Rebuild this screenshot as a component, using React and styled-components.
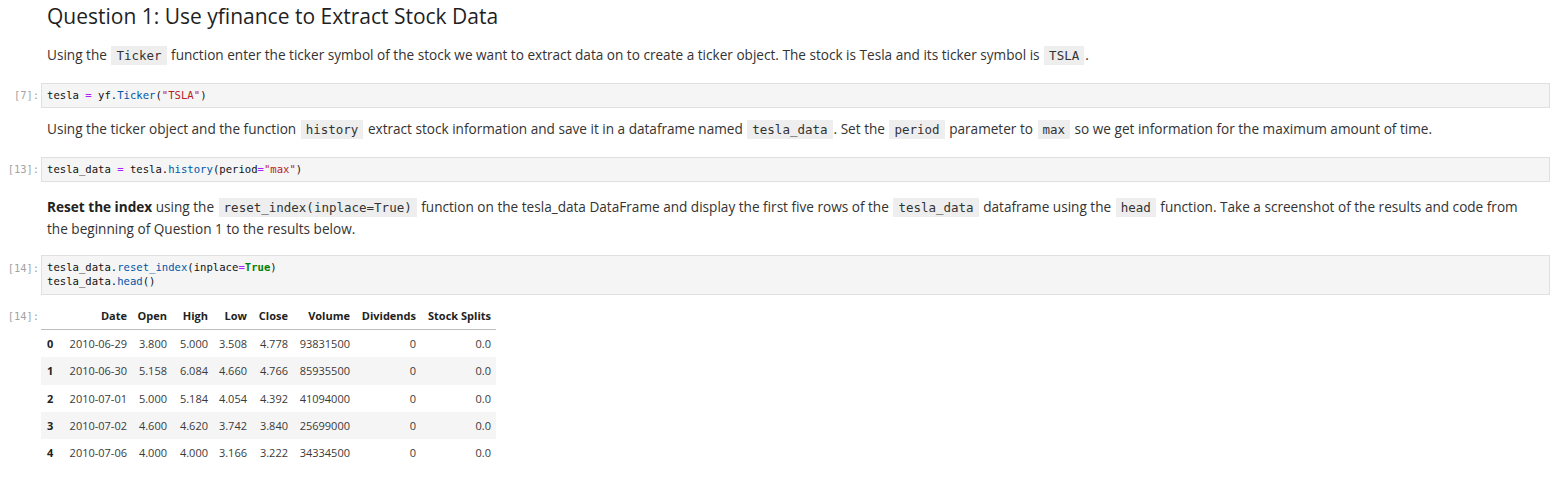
import React from "react";
import styled, { createGlobalStyle } from "styled-components";

const GlobalStyle = createGlobalStyle`
  body {
    margin: 0;
    background: #fff;
  }
`;

const Notebook = styled.div`
  width: 1558px;
  box-sizing: border-box;
  padding: 2px 8px 0 0;
  font-family: "Open Sans", "Noto Sans", sans-serif;
  color: #333;
`;

const Cell = styled.div`
  display: grid;
  grid-template-columns: 41px 1fr;
  margin-top: ${(p) => p.$mt || 0}px;
`;

const Prompt = styled.div`
  font-family: "DejaVu Sans Mono", "Liberation Mono", monospace;
  font-size: 10.4px;
  color: #a3a3a3;
  text-align: right;
  padding: ${(p) => p.$top || 5}px 2px 0 0;
  line-height: 14px;
  white-space: nowrap;
`;

const Markdown = styled.div`
  padding: 0 24px 0 6px;
`;

const Heading = styled.h2`
  margin: 0;
  font-size: 21px;
  line-height: 28px;
  font-weight: 400;
  color: #1f1f1f;
`;

const Para = styled.p`
  margin: 0;
  font-size: 13.6px;
  line-height: 21px;
  color: #333;

  b {
    font-weight: 700;
    color: #222;
  }
`;

const InlineCode = styled.code`
  font-family: "DejaVu Sans Mono", "Liberation Mono", monospace;
  font-size: 12.5px;
  background: #eee;
  color: #333;
  padding: 2px 5px;
  margin: 0 1px;
`;

const CodeBox = styled.pre`
  margin: 0;
  box-sizing: border-box;
  border: 1px solid #e0e0e0;
  background: #f5f5f5;
  padding: 4px 5px 5px;
  min-height: ${(p) => p.$min || 0}px;
  font-family: "DejaVu Sans Mono", "Liberation Mono", monospace;
  font-size: 10.6px;
  line-height: 14px;
  color: #111;
`;

const Tok = styled.span`
  color: ${(p) =>
    p.$k === "op" ? "#aa22ff" : p.$k === "prop" ? "#0055aa" : p.$k === "str" ? "#ba2121" : p.$k === "kw" ? "#008000" : "#111"};
  font-weight: ${(p) => (p.$k === "kw" ? 700 : 400)};
`;

const Table = styled.table`
  border-collapse: collapse;
  table-layout: fixed;
  width: 455px;
  font-family: "Open Sans", "Noto Sans", sans-serif;
  font-size: 11px;
  color: #3a3a3a;
`;

const Th = styled.th`
  text-align: right;
  font-weight: 700;
  color: #222;
  height: 28px;
  padding: 0 5px;
  border-bottom: 1px solid #bdbdbd;
  white-space: nowrap;
`;

const Row = styled.tr`
  background: ${(p) => (p.$odd ? "#f5f5f5" : "#fff")};
`;

const Td = styled.td`
  text-align: ${(p) => (p.$left ? "left" : "right")};
  font-weight: ${(p) => (p.$bold ? 700 : 400)};
  color: ${(p) => (p.$bold ? "#222" : "#3a3a3a")};
  height: 27.3px;
  padding: 0 5px 0 ${(p) => (p.$left ? 6 : 5)}px;
  white-space: nowrap;
`;

const widths = [20, 71, 40, 41, 39, 41, 62, 66, 75];
const headers = ["", "Date", "Open", "High", "Low", "Close", "Volume", "Dividends", "Stock Splits"];
const rows = [
  ["0", "2010-06-29", "3.800", "5.000", "3.508", "4.778", "93831500", "0", "0.0"],
  ["1", "2010-06-30", "5.158", "6.084", "4.660", "4.766", "85935500", "0", "0.0"],
  ["2", "2010-07-01", "5.000", "5.184", "4.054", "4.392", "41094000", "0", "0.0"],
  ["3", "2010-07-02", "4.600", "4.620", "3.742", "3.840", "25699000", "0", "0.0"],
  ["4", "2010-07-06", "4.000", "4.000", "3.166", "3.222", "34334500", "0", "0.0"],
];

export default function App() {
  return (
    <>
      <GlobalStyle />
      <Notebook>
        <Cell>
          <div />
          <Markdown>
            <Heading>Question 1: Use yfinance to Extract Stock Data</Heading>
          </Markdown>
        </Cell>

        <Cell $mt={14}>
          <div />
          <Markdown>
            <Para>
              Using the <InlineCode>Ticker</InlineCode> function enter the ticker symbol of the stock we want to
              extract data on to create a ticker object. The stock is Tesla and its ticker symbol is{" "}
              <InlineCode>TSLA</InlineCode>.
            </Para>
          </Markdown>
        </Cell>

        <Cell $mt={17}>
          <Prompt>[7]:</Prompt>
          <CodeBox>
            <Tok>tesla </Tok>
            <Tok $k="op">=</Tok>
            <Tok> yf.</Tok>
            <Tok $k="prop">Ticker</Tok>
            <Tok>(</Tok>
            <Tok $k="str">"TSLA"</Tok>
            <Tok>)</Tok>
          </CodeBox>
        </Cell>

        <Cell $mt={10}>
          <div />
          <Markdown>
            <Para>
              Using the ticker object and the function <InlineCode>history</InlineCode> extract stock information
              and save it in a dataframe named <InlineCode>tesla_data</InlineCode>. Set the{" "}
              <InlineCode>period</InlineCode> parameter to <InlineCode>max</InlineCode> so we get information for
              the maximum amount of time.
            </Para>
          </Markdown>
        </Cell>

        <Cell $mt={17}>
          <Prompt>[13]:</Prompt>
          <CodeBox>
            <Tok>tesla_data </Tok>
            <Tok $k="op">=</Tok>
            <Tok> tesla.</Tok>
            <Tok $k="prop">history</Tok>
            <Tok>(period</Tok>
            <Tok $k="op">=</Tok>
            <Tok $k="str">"max"</Tok>
            <Tok>)</Tok>
          </CodeBox>
        </Cell>

        <Cell $mt={14}>
          <div />
          <Markdown>
            <Para>
              <b>Reset the index</b> using the <InlineCode>reset_index(inplace=True)</InlineCode> function on the
              tesla_data DataFrame and display the first five rows of the <InlineCode>tesla_data</InlineCode>{" "}
              dataframe using the <InlineCode>head</InlineCode> function. Take a screenshot of the results and code
              from the beginning of Question 1 to the results below.
            </Para>
          </Markdown>
        </Cell>

        <Cell $mt={16}>
          <Prompt $top={6}>[14]:</Prompt>
          <CodeBox $min={40}>
            <Tok>tesla_data.</Tok>
            <Tok $k="prop">reset_index</Tok>
            <Tok>(inplace</Tok>
            <Tok $k="op">=</Tok>
            <Tok $k="kw">True</Tok>
            <Tok>)</Tok>
            {"\n"}
            <Tok>tesla_data.</Tok>
            <Tok $k="prop">head</Tok>
            <Tok>()</Tok>
          </CodeBox>
        </Cell>

        <Cell $mt={6}>
          <Prompt $top={8}>[14]:</Prompt>
          <div>
            <Table>
              <colgroup>
                {widths.map((w, i) => (
                  <col key={i} style={{ width: w }} />
                ))}
              </colgroup>
              <thead>
                <tr>
                  {headers.map((h, i) => (
                    <Th key={i}>{h}</Th>
                  ))}
                </tr>
              </thead>
              <tbody>
                {rows.map((r, ri) => (
                  <Row key={ri} $odd={ri % 2 === 1}>
                    {r.map((c, ci) => (
                      <Td key={ci} $bold={ci === 0} $left={ci === 0}>
                        {c}
                      </Td>
                    ))}
                  </Row>
                ))}
              </tbody>
            </Table>
          </div>
        </Cell>
      </Notebook>
    </>
  );
}
